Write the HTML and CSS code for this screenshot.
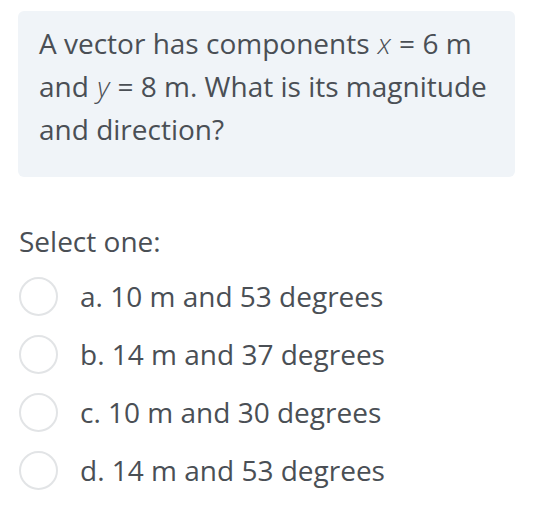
FILE: index.html
```html
<!DOCTYPE html>
<html>
<head>
<meta charset="utf-8">
<link rel="stylesheet" href="styles.css">
</head>
<body>
<div class="page">
  <div class="qtext">A vector has components <i>x</i> = 6 m and <i>y</i> = 8 m. What is its magnitude and direction?</div>
  <div class="prompt">Select one:</div>
  <div class="answers">
    <label class="opt"><span class="radio"></span><span class="ans">a. 10 m and 53 degrees</span></label>
    <label class="opt"><span class="radio"></span><span class="ans">b. 14 m and 37 degrees</span></label>
    <label class="opt"><span class="radio"></span><span class="ans">c. 10 m and 30 degrees</span></label>
    <label class="opt"><span class="radio"></span><span class="ans">d. 14 m and 53 degrees</span></label>
  </div>
</div>
</body>
</html>
```
FILE: styles.css
```css
html, body { margin: 0; padding: 0; background: #fff; }
body {
  font-family: "Open Sans", "Noto Sans", sans-serif;
  color: #4a4f55;
}
.page { padding: 11px 24px 0 18px; }
.qtext {
  background: #f0f4f8;
  border-radius: 6px;
  padding: 11px 22px 26px 21px;
  font-size: 28px;
  line-height: 43px;
}
.qtext i { font-style: italic; font-weight: 300; padding: 0 1px; }
.prompt {
  margin-top: 44px;
  margin-left: 1px;
  font-size: 28px;
  line-height: 40px;
}
.answers { display: flex; flex-direction: column; gap: 18px; margin-top: 15px; }
.opt { display: flex; align-items: center; gap: 22px; height: 40px; }
.radio {
  width: 39px; height: 39px;
  border: 2px solid #e2e4e6;
  border-radius: 50%;
  box-sizing: border-box;
  margin-left: 1px;
  flex: none;
}
.ans { font-size: 28px; }
```
